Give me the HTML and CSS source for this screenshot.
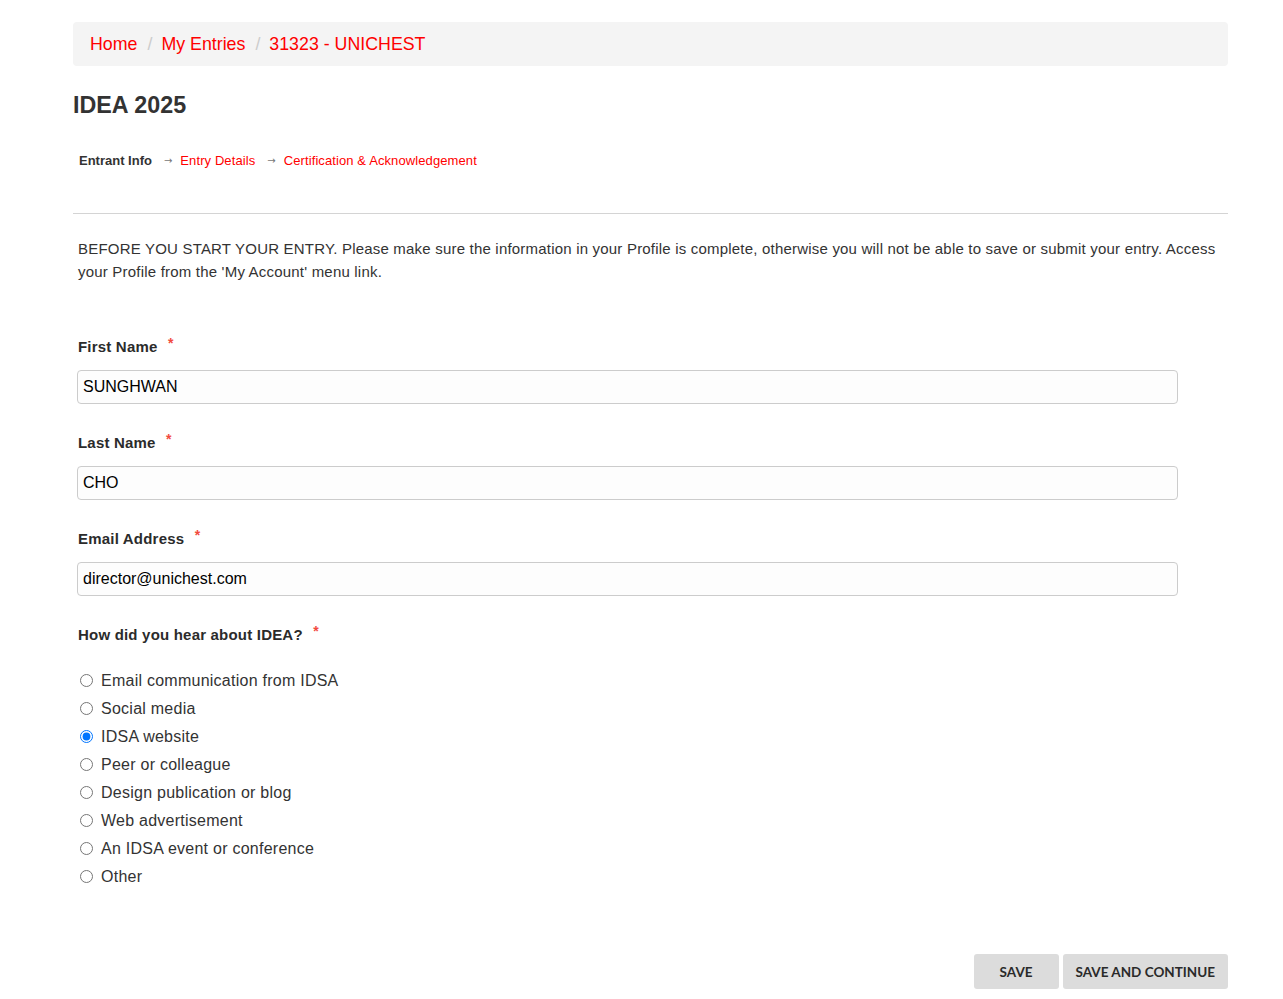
FILE: index.html
```html
<!DOCTYPE html>
<html lang="en">
<head>
<meta charset="utf-8">
<title>IDEA 2025 - Entrant Info</title>
<link rel="stylesheet" href="styles.css">
</head>
<body>
<div class="container">
  <ol class="breadcrumb">
    <li><a href="#">Home</a></li>
    <li><a href="#">My Entries</a></li>
    <li><a href="#">31323 - UNICHEST</a></li>
  </ol>

  <h1 class="title">IDEA 2025</h1>

  <div class="steps">
    <span class="step current">Entrant Info</span>
    <span class="arrow">&rarr;</span>
    <a class="step" href="#">Entry Details</a>
    <span class="arrow">&rarr;</span>
    <a class="step" href="#">Certification &amp; Acknowledgement</a>
  </div>

  <hr class="divider">

  <p class="intro">BEFORE YOU START YOUR ENTRY. Please make sure the information in your Profile is complete, otherwise you will not be able to save or submit your entry. Access your Profile from the 'My Account' menu link.</p>

  <form class="form">
    <div class="group">
      <label class="label">First Name <span class="req">*</span></label>
      <input class="input" type="text" value="SUNGHWAN">
    </div>
    <div class="group">
      <label class="label">Last Name <span class="req">*</span></label>
      <input class="input" type="text" value="CHO">
    </div>
    <div class="group">
      <label class="label">Email Address <span class="req">*</span></label>
      <input class="input" type="text" value="director@unichest.com">
    </div>
    <div class="group question">
      <label class="label">How did you hear about IDEA? <span class="req">*</span></label>
      <div class="radios">
        <label class="radio"><input type="radio" name="hear"> Email communication from IDSA</label>
        <label class="radio"><input type="radio" name="hear"> Social media</label>
        <label class="radio"><input type="radio" name="hear" checked> IDSA website</label>
        <label class="radio"><input type="radio" name="hear"> Peer or colleague</label>
        <label class="radio"><input type="radio" name="hear"> Design publication or blog</label>
        <label class="radio"><input type="radio" name="hear"> Web advertisement</label>
        <label class="radio"><input type="radio" name="hear"> An IDSA event or conference</label>
        <label class="radio"><input type="radio" name="hear"> Other</label>
      </div>
    </div>
    <div class="actions">
      <button type="button" class="btn">SAVE</button>
      <button type="button" class="btn">SAVE AND CONTINUE</button>
    </div>
  </form>
</div>
</body>
</html>
```

FILE: styles.css
```css
* { box-sizing: border-box; }
html, body { margin: 0; padding: 0; background: #fff; }
body {
  font-family: "Liberation Sans", Arial, sans-serif;
  color: #333;
}
.container {
  width: 1155px;
  margin: 0 0 0 73px;
  padding-top: 22px;
}
.breadcrumb {
  list-style: none;
  margin: 0;
  height: 44px;
  padding: 0 17px;
  background: #f4f4f4;
  border-radius: 4px;
  display: flex;
  align-items: center;
  font-size: 17.8px;
}
.breadcrumb li { display: flex; align-items: center; }
.breadcrumb li + li::before {
  content: "/";
  color: #ccc;
  padding: 0 9px 0 10px;
}
.breadcrumb a { color: #ff0000; text-decoration: none; }

.title {
  margin: 25px 0 0;
  font-size: 23.3px;
  line-height: 28px;
  font-weight: 700;
  color: #333;
}
.steps {
  margin: 32px 0 0 6px;
  font-size: 13px;
  line-height: 18px;
  display: flex;
  align-items: center;
}
.step { color: #ff0000; text-decoration: none; letter-spacing: 0.1px; }
.step.current { color: #333; font-weight: 600; letter-spacing: 0; }
.arrow {
  color: #777;
  font-family: "DejaVu Sans", sans-serif;
  font-size: 10px;
  margin: 1px 8px 0 12px;
}

.divider {
  margin: 43px 0 0;
  border: 0;
  border-top: 1px solid #d4d4d4;
}
.intro {
  margin: 23px 0 0 5px;
  font-size: 15px;
  line-height: 23px;
  letter-spacing: 0.2px;
  color: #333;
}
.form { margin: 50px 0 0 4px; }
.group { margin-bottom: 25px; width: 1101px; }
.label {
  display: block;
  font-weight: 700;
  font-size: 15px;
  letter-spacing: 0.2px;
  line-height: 20px;
  margin-left: 1px;
  margin-bottom: 13px;
  color: #2b2b2b;
}
.req {
  color: #f24a3e;
  font-size: 14px;
  vertical-align: 4px;
  margin-left: 6px;
}
.input {
  display: block;
  width: 100%;
  height: 34px;
  border: 1px solid #ccc;
  border-radius: 4px;
  background: #fdfdfd;
  padding: 0 5px;
  font-family: "Liberation Sans", Arial, sans-serif;
  font-size: 16px;
  color: #000;
}
.question .label { margin-bottom: 22px; }
.radios { display: flex; flex-direction: column; }
.radio {
  display: flex;
  align-items: center;
  height: 28px;
  font-size: 16px;
  letter-spacing: 0.25px;
  color: #333;
}
.radio input {
  margin: -1px 8px 0 3px;
  width: 13px;
  height: 13px;
}
.actions {
  display: flex;
  justify-content: flex-end;
  gap: 4px;
  margin: 63px 0 0 -4px;
  width: 1155px;
}
.btn {
  height: 35px;
  border: 0;
  border-radius: 3px;
  background: #dcdcdc;
  color: #2a2a2a;
  font-family: Lato, "Liberation Sans", sans-serif;
  font-weight: 700;
  font-size: 13.5px;
  padding: 0 13px;
}
.btn:first-child { width: 85px; }
```
